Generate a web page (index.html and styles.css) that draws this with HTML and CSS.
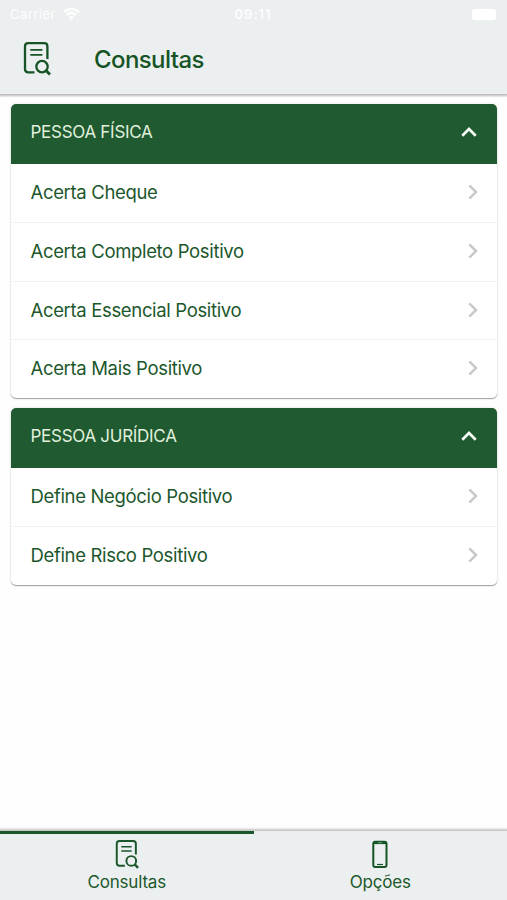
FILE: index.html
```html
<!DOCTYPE html>
<html lang="pt-BR">
<head>
<meta charset="utf-8">
<title>Consultas</title>
<link rel="stylesheet" href="styles.css">
</head>
<body>
<svg class="defs" width="0" height="0" aria-hidden="true">
  <symbol id="doc-search" viewBox="0 0 28 34">
    <g fill="none" stroke="currentColor" stroke-width="2.3">
      <path d="M11.5 30.3H5.2Q2 30.3 2 27V4.4Q2 1.2 5.2 1.2H21.2Q24.4 1.2 24.4 4.4V17"/>
      <path d="M7.3 7.8H19.4M7.3 12.8H19.4" stroke-width="1.8"/>
      <circle cx="19" cy="24.6" r="5.7"/>
      <path d="M23 28.6L27 32.6" stroke-width="2.8"/>
    </g>
  </symbol>
  <symbol id="up" viewBox="0 0 16 10"><path d="M1.3 8.7L8 2L14.7 8.7" fill="none" stroke="currentColor" stroke-width="2.7"/></symbol>
  <symbol id="next" viewBox="0 0 10 16"><path d="M1.3 1.3L8 8L1.3 14.7" fill="none" stroke="currentColor" stroke-width="2.5"/></symbol>
</svg>
<div class="app">
  <header class="header">
    <div class="status">
      <span class="carrier">Carrier
        <svg class="wifi" viewBox="0 0 18 14"><path d="M1 5Q9-2 17 5M4 8.2Q9 3.5 14 8.2" fill="none" stroke="currentColor" stroke-width="2.6"/><path d="M6 10.3Q9 7.8 12 10.3L9 13.5Z" fill="currentColor"/></svg>
      </span>
      <span class="time">09:11</span>
      <span class="power"><span class="battery"></span></span>
    </div>
    <div class="toolbar">
      <svg class="toolbar-icon"><use href="#doc-search"/></svg>
      <h1>Consultas</h1>
    </div>
  </header>
  <main class="content">
    <section class="card">
      <h2>PESSOA FÍSICA<svg class="up"><use href="#up"/></svg></h2>
      <ul>
        <li>Acerta Cheque<svg class="next"><use href="#next"/></svg></li>
        <li>Acerta Completo Positivo<svg class="next"><use href="#next"/></svg></li>
        <li>Acerta Essencial Positivo<svg class="next"><use href="#next"/></svg></li>
        <li>Acerta Mais Positivo<svg class="next"><use href="#next"/></svg></li>
      </ul>
    </section>
    <section class="card">
      <h2>PESSOA JURÍDICA<svg class="up"><use href="#up"/></svg></h2>
      <ul>
        <li>Define Negócio Positivo<svg class="next"><use href="#next"/></svg></li>
        <li>Define Risco Positivo<svg class="next"><use href="#next"/></svg></li>
      </ul>
    </section>
  </main>
  <nav class="tabs">
    <a class="tab active"><svg class="tab-doc"><use href="#doc-search"/></svg><span>Consultas</span></a>
    <a class="tab"><svg class="tab-phone" viewBox="0 0 16 28"><rect x="1.3" y="1.3" width="13.2" height="25.2" rx="2" fill="none" stroke="currentColor" stroke-width="2"/><path d="M1.5 2.6H14.3" stroke="currentColor" stroke-width="2"/><path d="M5 24H11" stroke="currentColor" stroke-width="1.2"/><path d="M6 2.2H10" stroke="#8fb09a" stroke-width=".8"/></svg><span>Opções</span></a>
  </nav>
</div>
</body>
</html>
```
FILE: styles.css
```css
* { box-sizing: border-box; }
body {
  margin: 0;
  font-family: Inter, "Liberation Sans", sans-serif;
  color: #1c572c;
  background: #fefefe;
}
.defs { position: absolute; }
.app { height: 900px; display: flex; flex-direction: column; overflow: hidden; }
.header {
  height: 94px;
  flex: none;
  background: #ebeff0;
  box-shadow: 0 1px 2px 1px #bbb9bb;
}
.status {
  height: 28px;
  padding: 0 11px 0 10px;
  display: grid;
  grid-template-columns: 1fr auto 1fr;
  align-items: center;
  color: #fcfdfd;
  font-size: 13px;
}
.carrier { display: flex; align-items: center; gap: 7px; letter-spacing: .45px; }
.wifi { width: 17px; height: 14px; }
.time { font-weight: 600; letter-spacing: 1px; }
.power { display: flex; justify-content: flex-end; }
.battery { width: 24px; height: 11px; border-radius: 3px; background: #fff; }
.toolbar { display: flex; align-items: center; height: 62px; padding-left: 23px; gap: 43px; }
.toolbar-icon { width: 28px; height: 34px; color: #165425; }
h1 { margin: 0; padding-top: 2px; font-size: 24px; font-weight: 500; letter-spacing: -.6px; line-height: 30px; color: #165425; }
.content { flex: 1; padding: 9.5px 10px 0 11px; display: flex; flex-direction: column; gap: 9.5px; }
.card {
  border-radius: 5px;
  background: #fff;
  box-shadow: 0 1px 1px #a0a0a0, 0 0 2px 1px #f0f0f0;
}
h2 {
  margin: 0;
  height: 60px;
  padding: 0 20px 3px 19.5px;
  display: flex;
  align-items: center;
  justify-content: space-between;
  background: #1f5a31;
  color: #e1f0dc;
  border-radius: 5px 5px 0 0;
  font-size: 17px;
  font-weight: 400;
  letter-spacing: -.28px;
}
.up { width: 16px; height: 10px; color: #f8fcf6; }
ul { margin: 0; padding: 0; list-style: none; }
li {
  height: 58.65px;
  padding: 0 19.5px 1.5px;
  display: flex;
  align-items: center;
  justify-content: space-between;
  font-size: 18.5px;
  letter-spacing: -.34px;
}
li + li { border-top: 1px solid #f3f3f3; }
.next { width: 10px; height: 16px; color: #c9c9c9; }
.tabs {
  height: 69px;
  flex: none;
  display: flex;
  background: #ebeff0;
  box-shadow: 0 -1px 2px 1px #c3c3c3;
}
.tab {
  flex: 1;
  display: flex;
  flex-direction: column;
  align-items: center;
  padding-top: 6px;
  gap: 2px;
  border-top: 3px solid transparent;
  font-size: 17px;
  letter-spacing: -.2px;
  line-height: 22px;
}
.active { border-top-color: #1c572c; }
.tab-doc { width: 24px; height: 29px; }
.tab-phone { width: 16px; height: 29px; color: #165425; }
```
